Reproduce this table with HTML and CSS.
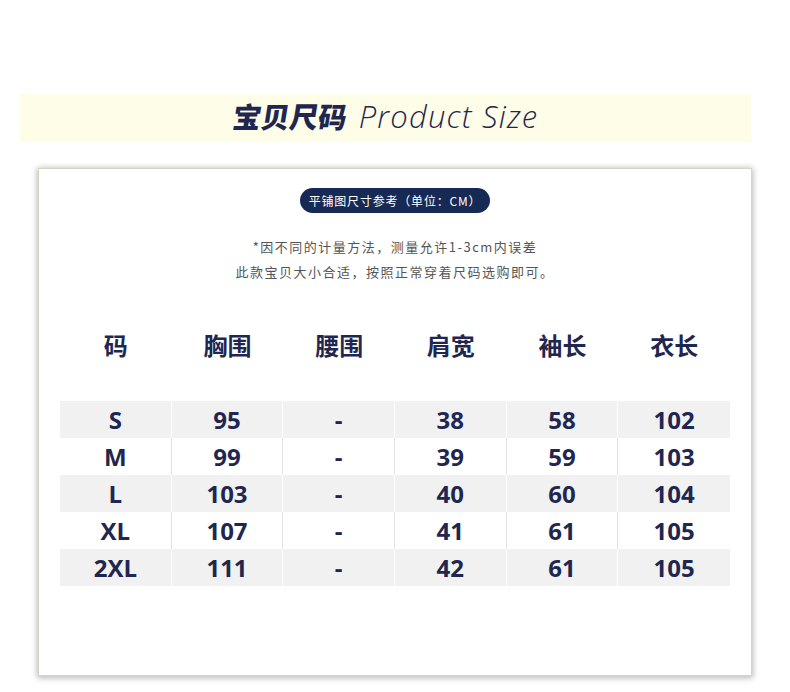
FILE: index.html
```html
<!DOCTYPE html>
<html lang="zh-CN">
<head>
<meta charset="utf-8">
<title>宝贝尺码 Product Size</title>
<link rel="stylesheet" href="styles.css">
</head>
<body>
<div class="page">
  <div class="title-band">
    <span class="title-cn">宝贝尺码</span>
    <span class="title-en">Product Size</span>
  </div>
  <div class="card">
    <div class="badge">平铺图尺寸参考（单位：CM）</div>
    <div class="note">
      <p>*因不同的计量方法，测量允许1-3cm内误差</p>
      <p>此款宝贝大小合适，按照正常穿着尺码选购即可。</p>
    </div>
    <div class="size-table">
      <div class="head-row">
        <div class="hcell">码</div>
        <div class="hcell">胸围</div>
        <div class="hcell">腰围</div>
        <div class="hcell">肩宽</div>
        <div class="hcell">袖长</div>
        <div class="hcell">衣长</div>
      </div>
      <div class="rows">
        <div class="row shade"><div class="cell">S</div><div class="cell">95</div><div class="cell">-</div><div class="cell">38</div><div class="cell">58</div><div class="cell">102</div></div>
        <div class="row"><div class="cell">M</div><div class="cell">99</div><div class="cell">-</div><div class="cell">39</div><div class="cell">59</div><div class="cell">103</div></div>
        <div class="row shade"><div class="cell">L</div><div class="cell">103</div><div class="cell">-</div><div class="cell">40</div><div class="cell">60</div><div class="cell">104</div></div>
        <div class="row"><div class="cell">XL</div><div class="cell">107</div><div class="cell">-</div><div class="cell">41</div><div class="cell">61</div><div class="cell">105</div></div>
        <div class="row shade"><div class="cell">2XL</div><div class="cell">111</div><div class="cell">-</div><div class="cell">42</div><div class="cell">61</div><div class="cell">105</div></div>
      </div>
    </div>
  </div>
</div>
</body>
</html>
```
FILE: styles.css
```css
html, body {
  margin: 0;
  padding: 0;
  background: #ffffff;
}
body {
  font-family: "Open Sans", "Noto Sans CJK SC", sans-serif;
  color: #1f2750;
}
.page {
  padding-top: 94px;
  padding-bottom: 16px;
}
.title-band {
  margin-left: 20px;
  width: 731px;
  height: 48px;
  background: #fefee8;
  display: flex;
  align-items: center;
  justify-content: center;
  gap: 12px;
  color: #1f2750;
}
.title-cn {
  font-family: "Noto Sans CJK SC", sans-serif;
  font-weight: 900;
  font-size: 28.5px;
  line-height: 1;
  transform: skewX(-9deg);
  margin-top: -3px;
}
.title-en {
  font-family: "Open Sans", sans-serif;
  font-weight: 300;
  font-style: italic;
  font-size: 31px;
  line-height: 1;
  letter-spacing: 1.2px;
  margin-top: -3px;
}
.card {
  margin-top: 26px;
  margin-left: 38px;
  width: 714px;
  height: 508px;
  box-sizing: border-box;
  border: 1px solid #d6d6c6;
  background: #fff;
  box-shadow: 0 1px 6px 1px rgba(0, 0, 0, 0.28);
  padding-top: 19px;
  display: flex;
  flex-direction: column;
  align-items: center;
}
.badge {
  height: 25px;
  width: 190px;
  border-radius: 13px;
  background: #172a55;
  color: #fff;
  font-family: "Noto Sans CJK SC", sans-serif;
  font-size: 12px;
  letter-spacing: 0.8px;
  line-height: 25px;
  text-align: center;
}
.note {
  margin-top: 21px;
  color: #555;
  font-family: "Noto Sans CJK SC", sans-serif;
  font-size: 13px;
  letter-spacing: 1.5px;
  line-height: 25px;
  text-align: center;
}
.note p {
  margin: 0;
}
.size-table {
  margin-top: 35px;
  width: 670px;
}
.head-row, .row {
  display: grid;
  grid-template-columns: repeat(6, 1fr);
}
.hcell {
  height: 50px;
  display: flex;
  align-items: center;
  justify-content: center;
  font-family: "Noto Sans CJK SC", sans-serif;
  font-weight: 700;
  font-size: 24px;
  color: #1f2750;
}
.rows {
  margin-top: 32px;
}
.row {
  height: 37px;
  background: #fff;
}
.row.shade {
  background: #f1f1f1;
}
.cell {
  display: flex;
  align-items: center;
  justify-content: center;
  font-family: "Open Sans", "Noto Sans CJK SC", sans-serif;
  font-weight: 700;
  font-size: 24px;
  color: #1f2750;
  border-right: 1px solid #e2e2e2;
}
.row.shade .cell {
  border-right-color: #ffffff;
}
.cell:last-child {
  border-right: none;
}
```
